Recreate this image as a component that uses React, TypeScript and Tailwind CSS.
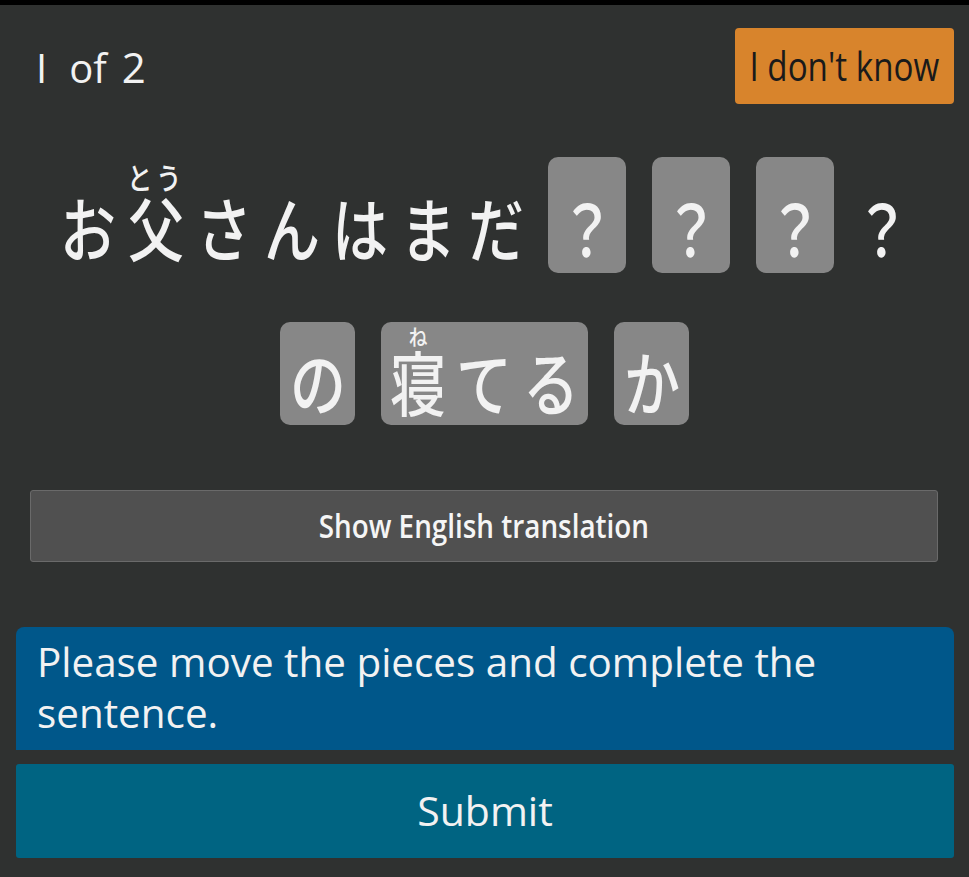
import React from "react";

const jp = "font-['Noto_Sans_CJK_JP',sans-serif]";
const lat = "font-['Open_Sans',sans-serif]";

function Glyph({ c }: { c: string }) {
  return (
    <span className="inline-block text-[70px] leading-[70px] font-medium scale-x-[0.8] text-[#f2f2f2] whitespace-nowrap">
      {c}
    </span>
  );
}

function Ch({
  c,
  ruby,
  rubyClass = "",
  w = "w-[68px]",
}: {
  c: string;
  ruby?: string;
  rubyClass?: string;
  w?: string;
}) {
  return (
    <div className={`${w} flex flex-col items-center`}>
      {ruby && (
        <span className={`inline-block whitespace-nowrap font-medium scale-x-[0.85] text-[#f2f2f2] ${rubyClass}`}>
          {ruby}
        </span>
      )}
      <Glyph c={c} />
    </div>
  );
}

function Tile1({ c }: { c: string }) {
  return (
    <div className="w-[78px] h-[116px] rounded-[10px] bg-[#878787] flex flex-col items-center justify-end pb-[11px]">
      <Glyph c={c} />
    </div>
  );
}

function Tile2({ children }: { children: React.ReactNode }) {
  return (
    <div className="h-[103px] px-[4px] rounded-[10px] bg-[#878787] flex items-end pb-[9px]">{children}</div>
  );
}

export default function App() {
  return (
    <div className={`w-[969px] h-[877px] bg-[#2f3130] flex flex-col ${jp}`}>
      <div className="h-[5px] bg-black" />
      <div className="flex items-center justify-between pt-[23px] pl-[36px] pr-[15px]">
        <span className={`${lat} text-[40px] text-[#f2f2f2] whitespace-nowrap`}>
          <span>I</span>
          <span className="ml-[22px]">of</span>
          <span className="ml-[15px] text-[42px]">2</span>
        </span>
        <button
          className={`${lat} w-[219px] h-[76px] rounded-[4px] bg-[#d8842c] flex items-center justify-center text-[40px] text-[#1a1a1a]`}
        >
          <span className="inline-block whitespace-nowrap scale-x-[0.83]">I don't know</span>
        </button>
      </div>

      <div className="mt-[53px] h-[116px] flex justify-center items-end pr-[12px]">
        <div className="flex items-end pb-[11px]">
          <Ch c="お" />
          <Ch c="父" ruby="とう" rubyClass="text-[30px] leading-[32px] tracking-[4px]" />
          <Ch c="さ" />
          <Ch c="ん" />
          <Ch c="は" />
          <Ch c="ま" />
          <Ch c="だ" />
        </div>
        <div className="ml-[18px] flex items-end gap-[26px]">
          <Tile1 c="？" />
          <Tile1 c="？" />
          <Tile1 c="？" />
          <div className="w-[44px] flex justify-center pb-[11px]">
            <Glyph c="？" />
          </div>
        </div>
      </div>

      <div className="mt-[49px] flex justify-center gap-[26px]">
        <Tile2>
          <Ch c="の" w="w-[67px]" />
        </Tile2>
        <Tile2>
          <Ch c="寝" ruby="ね" rubyClass="text-[22px] leading-[22px]" w="w-[66px]" />
          <Ch c="て" w="w-[66px]" />
          <Ch c="る" w="w-[67px]" />
        </Tile2>
        <Tile2>
          <Ch c="か" w="w-[67px]" />
        </Tile2>
      </div>

      <button
        className={`${lat} mt-[65px] ml-[30px] mr-[31px] h-[72px] rounded-[3px] border border-[#6a6a6a] bg-[#505050] flex items-center justify-center text-[32px] font-semibold text-[#f5f5f5]`}
      >
        <span className="inline-block whitespace-nowrap scale-x-[0.87]">Show English translation</span>
      </button>

      <div
        className={`${lat} mt-[65px] ml-[16px] mr-[15px] h-[123px] rounded-t-[8px] bg-[#00578a] pl-[21px] pr-[20px] pt-[9px] text-[40.4px] leading-[51px] text-[#f2f2f2]`}
      >
        Please move the pieces and complete the sentence.
      </div>

      <button
        className={`${lat} mt-[14px] ml-[16px] mr-[15px] h-[94px] rounded-[3px] bg-[#006482] text-[41px] text-[#f2f2f2]`}
      >
        Submit
      </button>
    </div>
  );
}
